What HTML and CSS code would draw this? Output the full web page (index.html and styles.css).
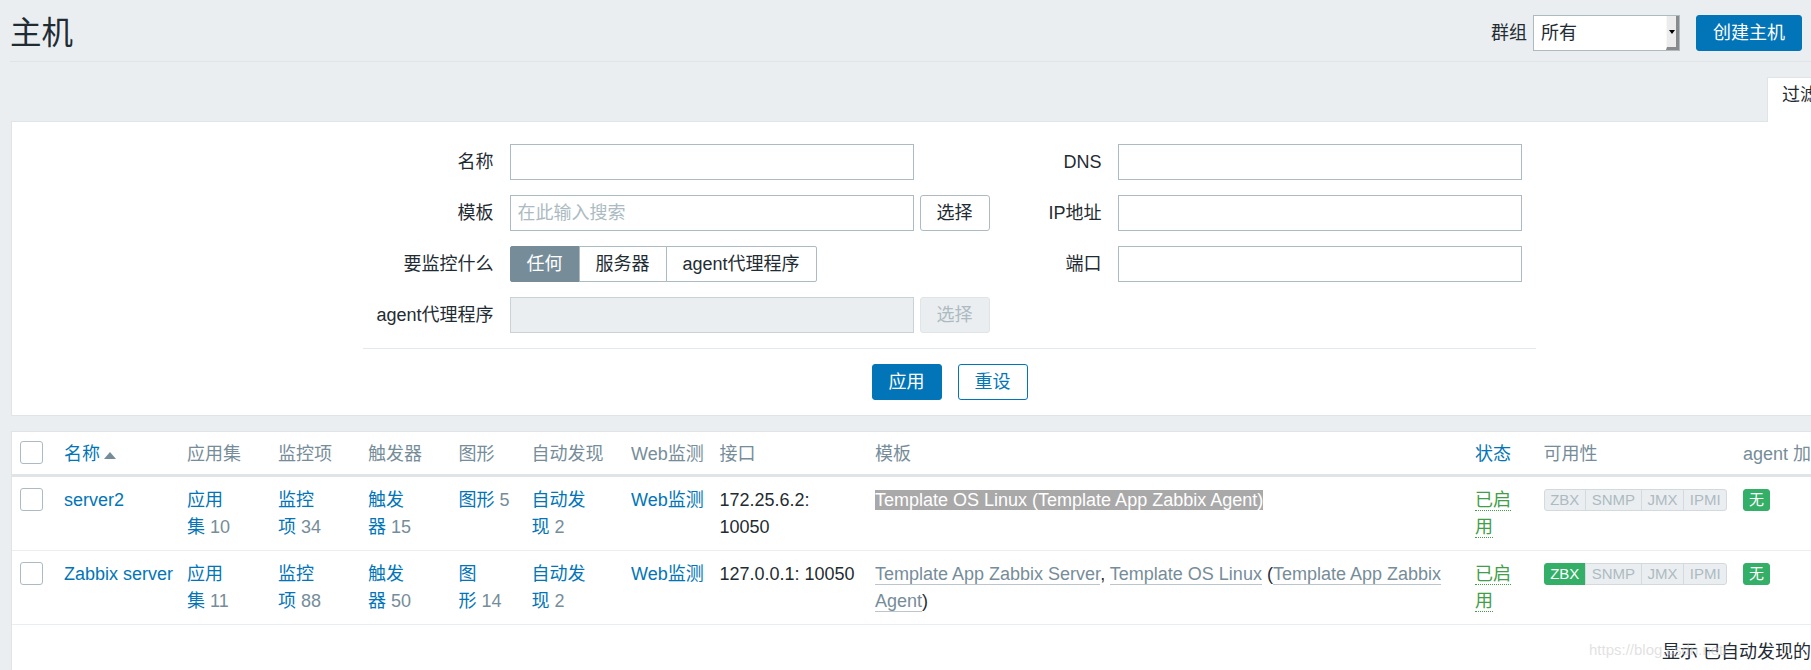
FILE: index.html
```html
<!DOCTYPE html>
<html lang="zh-CN">
<head>
<meta charset="utf-8">
<title>主机</title>
<link rel="stylesheet" href="styles.css">
</head>
<body>
<header class="page-header">
  <h1 class="page-title">主机</h1>
  <div class="header-controls">
    <span class="ctl-label">群组</span>
    <div class="select"><span class="select-value">所有</span><span class="select-arrow"><i class="tri-down"></i></span></div>
    <button class="btn btn-primary">创建主机</button>
  </div>
</header>
<main class="content">
  <section class="filter">
    <div class="filter-tabs"><div class="filter-tab">过滤器</div></div>
    <div class="filter-panel">
      <div class="filter-inner">
        <div class="filter-cols">
          <div class="form-grid form-left">
            <label>名称</label>
            <div class="field"><input class="input" type="text"></div>
            <label>模板</label>
            <div class="field"><input class="input" type="text" placeholder="在此输入搜索"><button class="btn btn-alt">选择</button></div>
            <label>要监控什么</label>
            <div class="field"><div class="radio-seg"><span class="seg on">任何</span><span class="seg">服务器</span><span class="seg">agent代理程序</span></div></div>
            <label>agent代理程序</label>
            <div class="field"><input class="input" type="text" disabled><button class="btn btn-alt" disabled>选择</button></div>
          </div>
          <div class="form-grid form-right">
            <label>DNS</label>
            <div class="field"><input class="input" type="text"></div>
            <label>IP地址</label>
            <div class="field"><input class="input" type="text"></div>
            <label>端口</label>
            <div class="field"><input class="input" type="text"></div>
          </div>
        </div>
        <div class="filter-buttons">
          <button class="btn btn-primary">应用</button>
          <button class="btn btn-outline">重设</button>
        </div>
      </div>
    </div>
  </section>

  <section class="list">
    <table>
      <colgroup>
        <col class="c-cb"><col class="c-name"><col class="c-app"><col class="c-item"><col class="c-trig"><col class="c-graph"><col class="c-disc"><col class="c-web"><col class="c-if"><col class="c-tpl"><col class="c-status"><col class="c-avail"><col>
      </colgroup>
      <thead>
        <tr>
          <th><span class="cb"></span></th>
          <th><a class="link">名称</a><i class="sort-up"></i></th>
          <th>应用集</th>
          <th>监控项</th>
          <th>触发器</th>
          <th>图形</th>
          <th>自动发现</th>
          <th>Web监测</th>
          <th>接口</th>
          <th>模板</th>
          <th><a class="link">状态</a></th>
          <th>可用性</th>
          <th>agent 加密</th>
        </tr>
      </thead>
      <tbody>
        <tr>
          <td><span class="cb cb-row"></span></td>
          <td class="nw"><a class="link">server2</a></td>
          <td><a class="link">应用</a><span class="nw"><a class="link">集</a><span class="cnt">10</span></span></td>
          <td><a class="link">监控</a><span class="nw"><a class="link">项</a><span class="cnt">34</span></span></td>
          <td><a class="link">触发</a><span class="nw"><a class="link">器</a><span class="cnt">15</span></span></td>
          <td><a class="link">图</a><span class="nw"><a class="link">形</a><span class="cnt">5</span></span></td>
          <td><a class="link">自动发</a><span class="nw"><a class="link">现</a><span class="cnt">2</span></span></td>
          <td class="nw"><a class="link">Web监测</a></td>
          <td>172.25.6.2: 10050</td>
          <td><span class="selected"><a class="tlink">Template OS Linux</a> (<a class="tlink">Template App Zabbix Agent</a>)</span></td>
          <td><a class="status-on">已启用</a></td>
          <td><span class="avail"><span class="st">ZBX</span><span class="st">SNMP</span><span class="st">JMX</span><span class="st">IPMI</span></span></td>
          <td><span class="badge">无</span></td>
        </tr>
        <tr>
          <td><span class="cb cb-row"></span></td>
          <td class="nw"><a class="link">Zabbix server</a></td>
          <td><a class="link">应用</a><span class="nw"><a class="link">集</a><span class="cnt">11</span></span></td>
          <td><a class="link">监控</a><span class="nw"><a class="link">项</a><span class="cnt">88</span></span></td>
          <td><a class="link">触发</a><span class="nw"><a class="link">器</a><span class="cnt">50</span></span></td>
          <td><a class="link">图</a><span class="nw"><a class="link">形</a><span class="cnt">14</span></span></td>
          <td><a class="link">自动发</a><span class="nw"><a class="link">现</a><span class="cnt">2</span></span></td>
          <td class="nw"><a class="link">Web监测</a></td>
          <td>127.0.0.1: 10050</td>
          <td><a class="tlink">Template App Zabbix Server</a>, <a class="tlink">Template OS Linux</a> (<a class="tlink">Template App Zabbix Agent</a>)</td>
          <td><a class="status-on">已启用</a></td>
          <td><span class="avail"><span class="st green">ZBX</span><span class="st">SNMP</span><span class="st">JMX</span><span class="st">IPMI</span></span></td>
          <td><span class="badge">无</span></td>
        </tr>
      </tbody>
    </table>
    <div class="list-footer">显示 已自动发现的 2中的2</div>
  </section>
</main>
<div class="watermark">https://blog.csdn.net/</div>
</body>
</html>
```
FILE: styles.css
```css
* { box-sizing: border-box; }
html, body { margin: 0; padding: 0; }
body {
  position: relative;
  width: 1811px;
  height: 670px;
  overflow: hidden;
  background: #ebeef0;
  color: #1f2c33;
  font-family: "Liberation Sans", Arial, "Noto Sans CJK SC", sans-serif;
  font-size: 18px;
  line-height: 27px;
}

/* header */
.page-header {
  display: flex;
  align-items: center;
  justify-content: space-between;
  height: 62px;
  margin-left: 10px;
  padding: 5px 9px 0 0;
  border-bottom: 1px solid #dfe4e7;
}
.page-title {
  margin: 0;
  font-size: 31.5px;
  line-height: 36px;
  font-weight: normal;
  color: #1f2c33;
}
.header-controls { display: flex; align-items: center; }
.ctl-label { margin-right: 6px; }
.select {
  display: flex;
  width: 147px;
  height: 36px;
  border: 1px solid #acbbc2;
  background: #fff;
  margin-right: 16px;
}
.select-value { flex: 1; padding-left: 7px; line-height: 34px; }
.select-value { color: #1f2c33; }
.select-arrow {
  width: 13px;
  display: flex;
  align-items: center;
  justify-content: center;
  background: #ececec;
  border-right: 3px solid #8a8a8a;
  border-bottom: 3px solid #8a8a8a;
  border-left: 1px solid #f8f8f8;
}
.tri-down {
  width: 0; height: 0;
  border-left: 3px solid transparent;
  border-right: 3px solid transparent;
  border-top: 4px solid #000;
}

/* buttons */
.btn {
  height: 36px;
  padding: 0 16px;
  border: 1px solid #0275b8;
  border-radius: 3px;
  font: inherit;
  line-height: 34px;
  white-space: nowrap;
}
.btn-primary { background: #0275b8; color: #fff; }
.btn-outline { background: #fff; color: #0275b8; }
.btn-alt { background: #fff; border-color: #acbbc2; color: #1f2c33; }
.btn-alt:disabled { background: #ebeef0; border-color: #dfe4e7; color: #acbbc2; }

/* content */
.content { margin-left: 11px; width: 1877px; }
.filter { margin-top: 15px; }
.filter-tabs { display: flex; justify-content: flex-end; }
.filter-tab {
  position: relative;
  z-index: 1;
  width: 121px;
  height: 45px;
  margin-bottom: -1px;
  padding: 4px 0 0 14px;
  background: #fff;
  border: 1px solid #dfe4e7;
  border-bottom: 0;
  white-space: nowrap;
}
.filter-panel {
  background: #fff;
  border: 1px solid #dfe4e7;
  padding: 22px 0 15px;
}
.filter-inner { width: max-content; margin: 0 auto; }
.filter-cols { display: flex; gap: 60px; padding: 0 14.5px; }
.form-grid {
  display: grid;
  grid-auto-rows: 36px;
  row-gap: 15px;
  column-gap: 16px;
  align-items: center;
}
.form-left { grid-template-columns: 116px auto; align-content: start; }
.form-right { grid-template-columns: 52px auto; align-content: start; }
.form-grid label { text-align: right; white-space: nowrap; direction: rtl; }
.field { display: flex; gap: 6px; }
.input {
  width: 404px;
  height: 36px;
  border: 1px solid #acbbc2;
  border-radius: 0;
  padding: 0 7px;
  font: inherit;
  color: #1f2c33;
  background: #fff;
  outline: none;
}
.input::placeholder { color: #acbbc2; }
.input:disabled { background: #ebeef0; border-color: #c9d2d7; }
.radio-seg { display: flex; }
.seg {
  height: 36px;
  line-height: 34px;
  padding: 0 16px;
  border: 1px solid #acbbc2;
  margin-left: -1px;
  background: #fff;
  white-space: nowrap;
}
.seg:first-child { margin-left: 0; border-radius: 2px 0 0 2px; }
.seg:last-child { border-radius: 0 2px 2px 0; }
.seg.on { background: #768d99; border-color: #768d99; color: #fff; }
.filter-buttons {
  display: flex;
  justify-content: center;
  gap: 16px;
  margin-top: 15px;
  padding-top: 15px;
  border-top: 1px solid #e4e8ea;
}

/* list */
.list {
  margin-top: 15px;
  background: #fff;
  border: 1px solid #dfe4e7;
  height: 300px;
}
.list table { width: 100%; border-collapse: collapse; table-layout: fixed; }
.c-cb { width: 44px; }
.c-name { width: 123px; }
.c-app { width: 91px; }
.c-item { width: 90px; }
.c-trig { width: 90.5px; }
.c-graph { width: 73px; }
.c-disc { width: 99.5px; }
.c-web { width: 88.5px; }
.c-if { width: 155.5px; }
.c-tpl { width: 600px; }
.c-status { width: 68.5px; }
.c-avail { width: 199.5px; }
.list th, .list td {
  padding: 10px 8px 9px;
  text-align: left;
  vertical-align: top;
  font-weight: normal;
}
.list thead th {
  padding: 9px 8px 6px;
  color: #768d99;
  border-bottom: 3px solid #dfe4e7;
  white-space: nowrap;
}
.list tbody td { border-bottom: 1px solid #ebeef0; }
.nw { white-space: nowrap; }
.link { color: #0275b8; text-decoration: none; }
.cnt { color: #768d99; margin-left: 5px; }
.cb {
  display: inline-block;
  width: 23px;
  height: 23px;
  border: 1px solid #acbbc2;
  border-radius: 3px;
  background: #fff;
  vertical-align: top;
}
.cb-row { margin-top: 1px; }
.sort-up {
  display: inline-block;
  width: 0; height: 0;
  margin-left: 4px;
  border-left: 6px solid transparent;
  border-right: 6px solid transparent;
  border-bottom: 7px solid #768d99;
  vertical-align: middle;
}
.tlink {
  color: #768d99;
  text-decoration: none;
  border-bottom: 1px solid rgba(118, 141, 153, 0.5);
}
.selected { background: #a9a9a9; color: #fff; }
.selected .tlink { color: #fff; border-bottom-color: rgba(255, 255, 255, 0.6); }
.status-on {
  color: #429e47;
  text-decoration: none;
  border-bottom: 1px dotted #429e47;
}
.avail {
  display: inline-flex;
  margin-top: 2px;
  vertical-align: top;
  font-size: 15px;
  line-height: 20px;
}
.st {
  padding: 0 5.7px;
  border: 1px solid #d3dade;
  margin-left: -1px;
  background: #ebeef0;
  color: #acbbc2;
}
.st:first-child { margin-left: 0; border-radius: 3px 0 0 3px; }
.st:last-child { border-radius: 0 3px 3px 0; }
.st.green { background: #34af67; border-color: #34af67; color: #fff; }
.badge {
  display: inline-block;
  margin-top: 2px;
  vertical-align: top;
  padding: 0 5px;
  border: 1px solid #34af67;
  border-radius: 3px;
  background: #34af67;
  color: #fff;
  font-size: 15px;
  line-height: 20px;
}
.list-footer { padding: 14px 15px; text-align: right; white-space: nowrap; }

.watermark {
  position: absolute;
  left: 1589px;
  top: 640px;
  font-size: 15px;
  line-height: 20px;
  color: rgba(200, 200, 200, 0.55);
  white-space: nowrap;
  pointer-events: none;
}
```
